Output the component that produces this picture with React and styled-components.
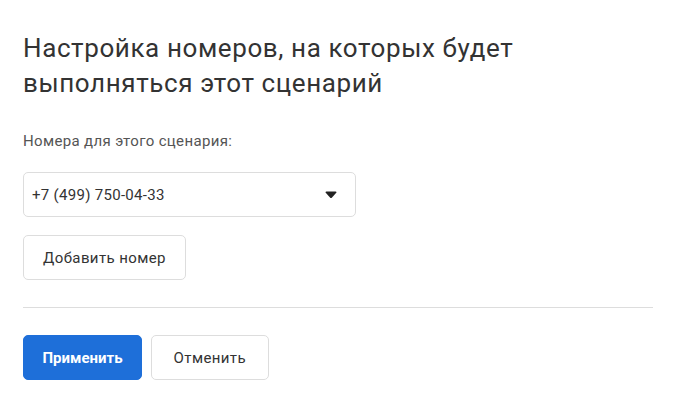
import React, { useState } from 'react';
import styled, { createGlobalStyle } from 'styled-components';

const GlobalStyle = createGlobalStyle`
  body {
    margin: 0;
    background: #ffffff;
    font-family: Roboto, "Liberation Sans", sans-serif;
  }
`;

const Page = styled.div`
  width: 630px;
  padding: 31px 0 0 23px;
`;

const Title = styled.h1`
  margin: 0 0 30px;
  font-size: 26px;
  line-height: 35px;
  letter-spacing: 0.6px;
  font-weight: 400;
  color: #333333;
`;

const Label = styled.div`
  font-size: 15px;
  line-height: 20px;
  letter-spacing: 0.35px;
  color: #555555;
  margin-bottom: 21px;
`;

const Select = styled.div`
  width: 333px;
  height: 45px;
  box-sizing: border-box;
  border: 1px solid #dddddd;
  border-radius: 5px;
  display: flex;
  align-items: center;
  justify-content: space-between;
  padding: 0 18px 0 8px;
  font-size: 15px;
  letter-spacing: 0.3px;
  color: #333333;
  margin-bottom: 18px;
`;

const Button = styled.button`
  height: 45px;
  box-sizing: border-box;
  padding: 0 ${p => p.$pad || 18}px;
  border-radius: 5px;
  border: 1px solid ${p => (p.$primary ? '#1e6fd9' : '#dddddd')};
  background: ${p => (p.$primary ? '#1e6fd9' : '#ffffff')};
  color: ${p => (p.$primary ? '#ffffff' : '#333333')};
  font-family: Roboto, "Liberation Sans", sans-serif;
  font-size: 15px;
  letter-spacing: ${p => (p.$primary ? 0 : 0.4)}px;
  font-weight: ${p => (p.$primary ? 700 : 400)};
  cursor: pointer;
`;

const Divider = styled.hr`
  border: none;
  border-top: 1px solid #dddddd;
  margin: 27px 0;
`;

const Actions = styled.div`
  display: flex;
  gap: 9px;
`;

const Arrow = () => (
  <svg width="12" height="8" viewBox="0 0 12 8">
    <path d="M0.5 1.5 Q0.5 0.5 1.5 0.5 L10.5 0.5 Q11.5 0.5 11.5 1.5 L7 6.5 Q6 7.5 5 6.5 Z" fill="#222222" />
  </svg>
);

const App = () => {
  const [phone] = useState('+7 (499) 750-04-33');

  return (
    <Page>
      <GlobalStyle />
      <Title>
        Настройка номеров, на которых будет
        <br />
        выполняться этот сценарий
      </Title>
      <Label>Номера для этого сценария:</Label>
      <Select>
        <span>{phone}</span>
        <Arrow />
      </Select>
      <Button $pad={19}>Добавить номер</Button>
      <Divider />
      <Actions>
        <Button $primary $pad={18.5}>Применить</Button>
        <Button $pad={21.5}>Отменить</Button>
      </Actions>
    </Page>
  );
};

export default App;
